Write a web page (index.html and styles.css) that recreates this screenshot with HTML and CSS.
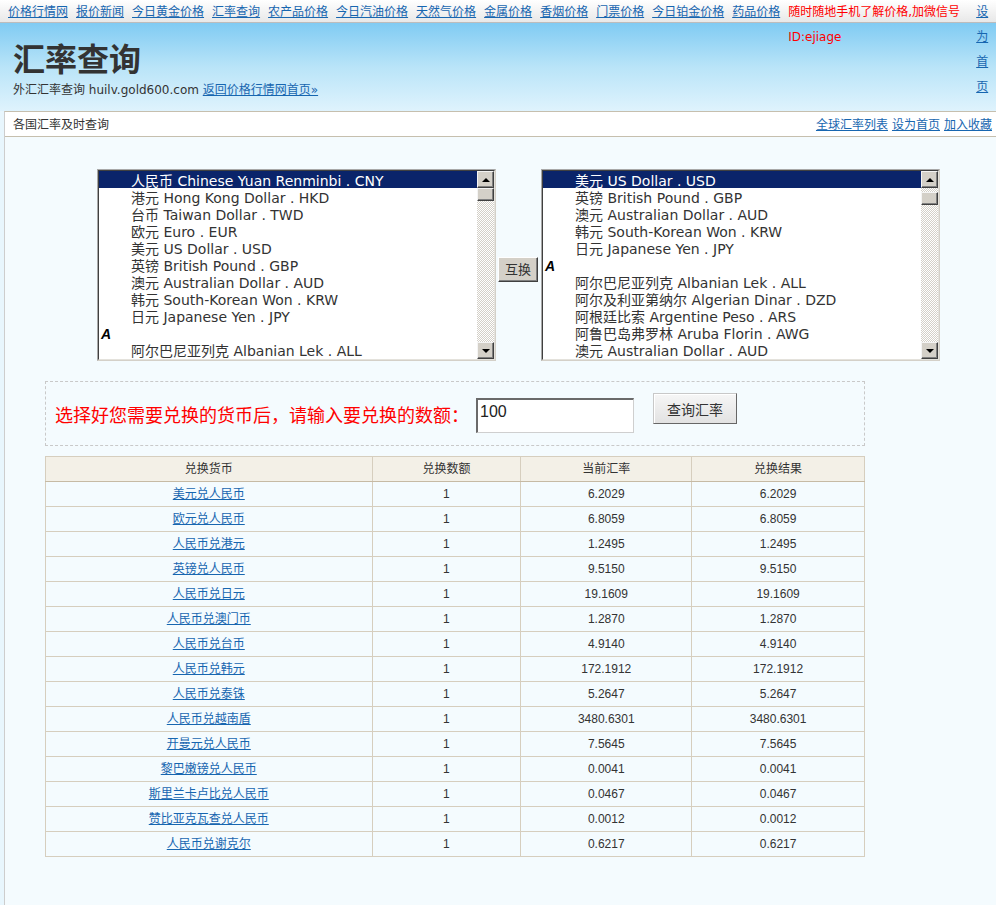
FILE: index.html
```html
<!DOCTYPE html>
<html lang="zh-CN">
<head>
<meta charset="utf-8">
<title>汇率查询</title>
<link rel="stylesheet" href="styles.css">
</head>
<body>
<div class="topbar">
  <nav class="nav">
    <a href="#">价格行情网</a>
    <a href="#">报价新闻</a>
    <a href="#">今日黄金价格</a>
    <a href="#">汇率查询</a>
    <a href="#">农产品价格</a>
    <a href="#">今日汽油价格</a>
    <a href="#">天然气价格</a>
    <a href="#">金属价格</a>
    <a href="#">香烟价格</a>
    <a href="#">门票价格</a>
    <a href="#">今日铂金价格</a>
    <a href="#">药品价格</a>
    <span class="wx">随时随地手机了解价格,加微信号 ID:ejiage</span>
    <a class="sethome" href="#">设为首页</a>
  </nav>
</div>
<header class="head">
  <h1>汇率查询</h1>
  <p class="sub">外汇汇率查询 huilv.gold600.com <a href="#">返回价格行情网首页»</a></p>
</header>
<div class="main">
  <div class="bar">
    <span>各国汇率及时查询</span>
    <span class="bar-links"><a href="#">全球汇率列表</a><a href="#">设为首页</a><a href="#">加入收藏</a></span>
  </div>
  <div class="content">
    <div class="pickers">
      <div class="list">
        <div class="list-in">
          <div class="opts">
            <div class="opt sel">人民币 Chinese Yuan Renminbi . CNY</div>
            <div class="opt">港元 Hong Kong Dollar . HKD</div>
            <div class="opt">台币 Taiwan Dollar . TWD</div>
            <div class="opt">欧元 Euro . EUR</div>
            <div class="opt">美元 US Dollar . USD</div>
            <div class="opt">英镑 British Pound . GBP</div>
            <div class="opt">澳元 Australian Dollar . AUD</div>
            <div class="opt">韩元 South-Korean Won . KRW</div>
            <div class="opt">日元 Japanese Yen . JPY</div>
            <div class="grp">A</div>
            <div class="opt">阿尔巴尼亚列克 Albanian Lek . ALL</div>
          </div>
          <div class="sb">
            <div class="sb-btn"><span class="tri up"></span></div>
            <div class="sb-thumb"></div>
            <div class="sb-track"></div>
            <div class="sb-btn"><span class="tri down"></span></div>
          </div>
        </div>
      </div>
      <button class="swap" type="button">互换</button>
      <div class="list">
        <div class="list-in">
          <div class="opts">
            <div class="opt sel">美元 US Dollar . USD</div>
            <div class="opt">英镑 British Pound . GBP</div>
            <div class="opt">澳元 Australian Dollar . AUD</div>
            <div class="opt">韩元 South-Korean Won . KRW</div>
            <div class="opt">日元 Japanese Yen . JPY</div>
            <div class="grp">A</div>
            <div class="opt">阿尔巴尼亚列克 Albanian Lek . ALL</div>
            <div class="opt">阿尔及利亚第纳尔 Algerian Dinar . DZD</div>
            <div class="opt">阿根廷比索 Argentine Peso . ARS</div>
            <div class="opt">阿鲁巴岛弗罗林 Aruba Florin . AWG</div>
            <div class="opt">澳元 Australian Dollar . AUD</div>
          </div>
          <div class="sb">
            <div class="sb-btn"><span class="tri up"></span></div>
            <div class="sb-thumb low"></div>
            <div class="sb-track"></div>
            <div class="sb-btn"><span class="tri down"></span></div>
          </div>
        </div>
      </div>
    </div>

    <div class="form">
      <span class="tip">选择好您需要兑换的货币后，请输入要兑换的数额：</span>
      <input class="amount" type="text" value="100">
      <button class="query" type="button">查询汇率</button>
    </div>

    <table class="rates">
      <thead>
        <tr><th class="c1">兑换货币</th><th class="c2">兑换数额</th><th class="c3">当前汇率</th><th class="c4">兑换结果</th></tr>
      </thead>
      <tbody>
        <tr><td><a href="#">美元兑人民币</a></td><td>1</td><td>6.2029</td><td>6.2029</td></tr>
        <tr><td><a href="#">欧元兑人民币</a></td><td>1</td><td>6.8059</td><td>6.8059</td></tr>
        <tr><td><a href="#">人民币兑港元</a></td><td>1</td><td>1.2495</td><td>1.2495</td></tr>
        <tr><td><a href="#">英镑兑人民币</a></td><td>1</td><td>9.5150</td><td>9.5150</td></tr>
        <tr><td><a href="#">人民币兑日元</a></td><td>1</td><td>19.1609</td><td>19.1609</td></tr>
        <tr><td><a href="#">人民币兑澳门币</a></td><td>1</td><td>1.2870</td><td>1.2870</td></tr>
        <tr><td><a href="#">人民币兑台币</a></td><td>1</td><td>4.9140</td><td>4.9140</td></tr>
        <tr><td><a href="#">人民币兑韩元</a></td><td>1</td><td>172.1912</td><td>172.1912</td></tr>
        <tr><td><a href="#">人民币兑泰铢</a></td><td>1</td><td>5.2647</td><td>5.2647</td></tr>
        <tr><td><a href="#">人民币兑越南盾</a></td><td>1</td><td>3480.6301</td><td>3480.6301</td></tr>
        <tr><td><a href="#">开曼元兑人民币</a></td><td>1</td><td>7.5645</td><td>7.5645</td></tr>
        <tr><td><a href="#">黎巴嫩镑兑人民币</a></td><td>1</td><td>0.0041</td><td>0.0041</td></tr>
        <tr><td><a href="#">斯里兰卡卢比兑人民币</a></td><td>1</td><td>0.0467</td><td>0.0467</td></tr>
        <tr><td><a href="#">赞比亚克瓦查兑人民币</a></td><td>1</td><td>0.0012</td><td>0.0012</td></tr>
        <tr><td><a href="#">人民币兑谢克尔</a></td><td>1</td><td>0.6217</td><td>0.6217</td></tr>
      </tbody>
    </table>
  </div>
</div>
</body>
</html>
```

FILE: styles.css
```css
* { box-sizing: border-box; }
html, body { margin: 0; padding: 0; }
body {
  width: 996px;
  overflow-x: hidden;
  background: #e8f6fd;
  font-family: "Noto Sans CJK SC", sans-serif;
  color: #333;
}
a { color: #1766b0; text-decoration: underline; }

/* top navigation */
.topbar {
  height: 23px;
  background: linear-gradient(#ffffff, #e8e8e8);
  border-bottom: 1px solid #bcbcbc;
  box-shadow: 0 1px 0 #ffffff;
}
.nav {
  display: flex;
  gap: 8px;
  padding-left: 8px;
  height: 22px;
  font-family: "DejaVu Sans", "Noto Sans CJK SC", sans-serif;
  font-size: 12px;
  line-height: 25px;
}
.nav a { flex: none; white-space: nowrap; }
.nav .wx { flex: none; width: 180px; color: #ff0000; }
.nav .sethome { width: 12px; white-space: normal; }

/* header */
.head {
  height: 88px;
  padding: 14px 0 0 13px;
  background: linear-gradient(#80cbf3, #b9e4f8 50%, #dff3fd);
}
.head h1 {
  margin: 0;
  font-size: 32px;
  line-height: 40px;
  font-weight: bold;
  color: #333;
}
.head .sub {
  margin: 4px 0 0;
  font-family: "DejaVu Sans", "Noto Sans CJK SC", sans-serif;
  font-size: 12px;
  line-height: 18px;
  color: #333;
}

/* main box */
.main {
  margin-left: 4px;
  width: 1000px;
  min-height: 794px;
  border-left: 1px solid #cdcdcd;
  border-top: 1px solid #c6bfae;
  background: #f4fbfe;
}
.bar {
  height: 25px;
  display: flex;
  justify-content: space-between;
  align-items: center;
  padding: 0 12px 0 8px;
  background: #ffffff;
  border-bottom: 1px solid #c6bfae;
  font-size: 12px;
  line-height: 16px;
}
.bar-links { display: flex; gap: 4px; }

.content { padding: 32px 0 40px 40px; }

/* currency lists */
.pickers {
  display: flex;
  align-items: center;
  margin-left: 52px;
  height: 192px;
}
.list {
  width: 399px;
  height: 192px;
  border: 1px solid;
  border-color: #a8a8a8 #d4d0c8 #d4d0c8 #a8a8a8;
  background: #ffffff;
}
.list-in {
  height: 100%;
  display: flex;
  border: 1px solid;
  border-color: #404040 #e4e2dc #e4e2dc #404040;
}
.opts {
  flex: 1;
  overflow: hidden;
  font-family: "DejaVu Sans", "Noto Sans CJK SC", sans-serif;
  font-size: 14px;
  color: #333;
}
.opt, .grp {
  height: 17px;
  padding-top: 3px;
  line-height: 14px;
  white-space: nowrap;
}
.opt { padding-left: 32px; }
.opt.sel { background: #0a246a; color: #ffffff; }
.grp {
  padding-left: 2px;
  font-family: "Liberation Sans", sans-serif;
  font-weight: bold;
  font-style: italic;
  color: #000;
}
.sb {
  width: 17px;
  display: flex;
  flex-direction: column;
  background: repeating-conic-gradient(#d4d0c8 0 25%, #ffffff 0 50%) 0 0 / 2px 2px;
}
.sb-btn, .sb-thumb {
  flex: none;
  height: 17px;
  background: #d4d0c8;
  border: 1px solid;
  border-color: #f4f4f4 #404040 #404040 #f4f4f4;
  box-shadow: inset -1px -1px 0 #808080;
  display: flex;
  align-items: center;
  justify-content: center;
}
.sb-thumb { height: 13px; }
.sb-thumb.low { margin-top: 4px; }
.sb-track { flex: 1; }
.tri { width: 0; height: 0; border-left: 4px solid transparent; border-right: 4px solid transparent; }
.tri.up { border-bottom: 4px solid #000; }
.tri.down { border-top: 4px solid #000; }

.swap {
  width: 40px;
  height: 25px;
  margin: 8px 3px 0 2px;
  padding: 0;
  background: #d4d0c8;
  border: 1px solid;
  border-color: #ffffff #404040 #404040 #ffffff;
  box-shadow: inset -1px -1px 0 #808080;
  font-family: "Noto Sans CJK SC", sans-serif;
  font-size: 13px;
  line-height: 16px;
  color: #333;
}

/* amount form */
.form {
  width: 820px;
  height: 65px;
  margin-top: 20px;
  padding-left: 9px;
  display: flex;
  align-items: flex-start;
  border: 1px dashed #c9c9c9;
}
.tip {
  margin-top: 20px;
  color: #ff0000;
  font-size: 18px;
  line-height: 24px;
  white-space: nowrap;
}
.amount {
  width: 158px;
  height: 35px;
  margin: 16px 0 0 7px;
  padding: 0 2px 9px;
  border-style: solid;
  border-width: 2px 1px 1px 2px;
  border-color: #6a6a6a #cfcfcf #cfcfcf #6a6a6a;
  background: #ffffff;
  font-family: "Liberation Sans", sans-serif;
  font-size: 16px;
  color: #222;
}
.query {
  width: 84px;
  height: 31px;
  margin: 11px 0 0 19px;
  padding: 0;
  background: linear-gradient(#f6f6f6, #e2e2e2);
  border: 1px solid;
  border-color: #c8c8c8 #666666 #666666 #c8c8c8;
  box-shadow: inset 1px 1px 0 #ffffff;
  font-family: "Noto Sans CJK SC", sans-serif;
  font-size: 14px;
  line-height: 18px;
  color: #333;
}

/* rates table */
.rates {
  width: 820px;
  margin-top: 10px;
  border-collapse: collapse;
  border: 1px solid #c6baa4;
  font-family: "Liberation Sans", "Noto Sans CJK SC", sans-serif;
  font-size: 12px;
  line-height: 16px;
  color: #333;
}
.rates th, .rates td {
  height: 25px;
  padding: 0;
  text-align: center;
  font-weight: normal;
  border: 1px solid #d6cebe;
}
.rates th { background: #f3f0e7; }
.rates thead th { border-bottom-color: #c6baa4; }
.rates .c1 { width: 327px; }
.rates .c2 { width: 149px; }
.rates .c3 { width: 171px; }
.rates .c4 { width: 173px; }
```
